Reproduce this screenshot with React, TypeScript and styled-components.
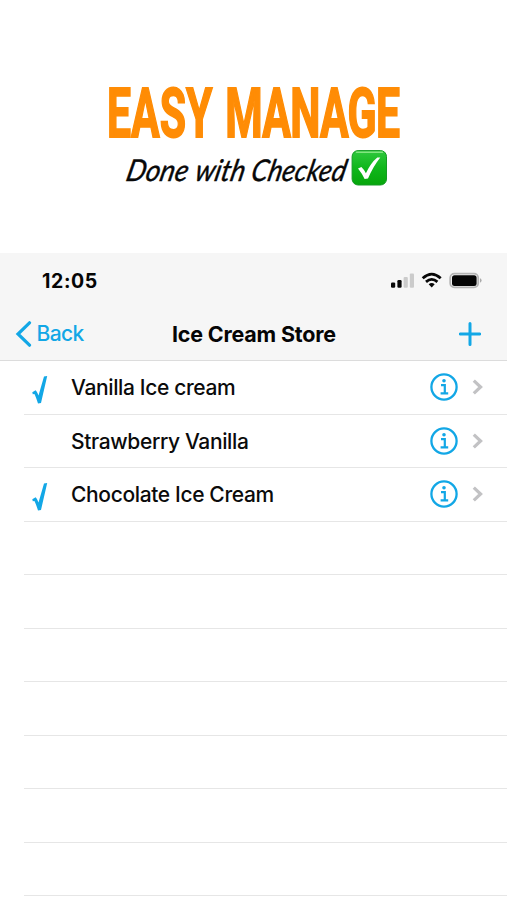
import React from "react";
import styled, { createGlobalStyle } from "styled-components";

const BLUE = "#12a7e6";

const GlobalStyle = createGlobalStyle`
  *, *::before, *::after { box-sizing: border-box; }
  body { margin: 0; background: #fff; font-family: Inter, "Liberation Sans", sans-serif; }
`;

const Page = styled.main`
  width: 507px;
  height: 900px;
  overflow: hidden;
  background: #fff;
  display: flex;
  flex-direction: column;
`;

const Promo = styled.header`
  height: 253px;
  flex: none;
  padding-top: 80px;
`;

const Headline = styled.h1`
  margin: 0 0 0 107px;
  width: max-content;
  height: 69px;
  font: 700 68px/69px Roboto, sans-serif;
  color: #ff8c05;
  white-space: nowrap;
  word-spacing: 3.5px;
  transform-origin: 0 0;
  transform: scaleX(0.628);
  -webkit-text-stroke: 1.8px #ff8c05;
`;

const TightWord = styled.span`
  letter-spacing: -1.2px;
`;

const Tagline = styled.div`
  display: flex;
  height: 40px;
  padding-left: 125px;
`;

const ScriptWord = styled.span<{ $slot: number; $scale: number }>`
  width: ${(p) => p.$slot}px;
  flex: none;
  height: 40px;
  font: italic 400 30px/40px Lato, sans-serif;
  color: #080808;
  white-space: nowrap;
  transform-origin: 0 31px;
  transform: scaleX(${(p) => p.$scale}) skewX(-14deg);
  -webkit-text-stroke: 0.4px #080808;
`;

const CheckBadge = styled.svg`
  width: 36px;
  height: 36px;
  margin-top: 1px;
  flex: none;
`;

const TopBar = styled.section`
  height: 108px;
  flex: none;
  background: #f6f6f6;
  border-bottom: 1px solid #dcdcdc;
`;

const StatusBar = styled.div`
  height: 54px;
  display: flex;
  align-items: center;
  justify-content: space-between;
  padding: 1px 25px 0 42px;
`;

const Clock = styled.span`
  font-size: 19.5px;
  font-weight: 700;
  letter-spacing: 0.6px;
  color: #050505;
`;

const StatusIcons = styled.svg`
  width: 92px;
  height: 18px;
`;

const NavBar = styled.nav`
  height: 53px;
  display: grid;
  grid-template-columns: 157px 1fr 50px;
  align-items: center;
  padding: 0 26px 0 15px;
`;

const BackButton = styled.button`
  border: 0;
  padding: 0;
  background: none;
  display: flex;
  align-items: center;
  gap: 4.5px;
  font: 500 21px/26px Inter, sans-serif;
  letter-spacing: -0.6px;
  color: ${BLUE};
`;

const BackLabel = styled.span`
  padding-top: 1px;
`;

const Title = styled.h2`
  margin: 0;
  font-size: 21.5px;
  line-height: 26px;
  font-weight: 700;
  letter-spacing: -0.2px;
  color: #050505;
  white-space: nowrap;
`;

const AddButton = styled.button`
  border: 0;
  padding: 0;
  background: none;
  justify-self: end;
  display: flex;
`;

const List = styled.ul`
  list-style: none;
  margin: 0;
  padding: 0 0 0 24px;
`;

const Row = styled.li`
  height: 53.55px;
  border-bottom: 1px solid #e6e6e6;
  display: flex;
  align-items: center;
`;

const CheckSlot = styled.span`
  width: 47px;
  height: 30px;
  padding: 4px 0 0 8px;
  flex: none;
`;

const Label = styled.span`
  flex: 1;
  padding-top: 2px;
  font-size: 21px;
  line-height: 26px;
  font-weight: 500;
  letter-spacing: -0.36px;
  color: #0b0b0b;
  white-space: nowrap;
`;

const Accessories = styled.span`
  display: flex;
  align-items: center;
  gap: 14px;
  padding-right: 24px;
`;

const Tick = () => (
  <svg width="16" height="28" viewBox="0 0 16 28" display="block">
    <path d="M0.3 16.2L3.6 14.2Q4.8 15 6.5 19.6L12 0.5L15.2 0L9 27L6 27.4Q3.8 20.5 2.4 17.9L0.8 18.3Z" fill={BLUE} />
  </svg>
);

const Info = () => (
  <svg width="28" height="28" viewBox="0 0 28 28">
    <circle cx="14" cy="14" r="12.6" fill="none" stroke={BLUE} strokeWidth="2.3" />
    <circle cx="14" cy="7.7" r="1.8" fill={BLUE} />
    <path d="M11 12.1H14.8V20.3M10.6 20.3H18.2" fill="none" stroke={BLUE} strokeWidth="2.2" />
  </svg>
);

const Chevron = () => (
  <svg width="11" height="16" viewBox="0 0 11 16">
    <path d="M1.8 1.6L8.6 8L1.8 14.4" fill="none" stroke="#c2c2c4" strokeWidth="3.2" />
  </svg>
);

const items = [
  { name: "Vanilla Ice cream", checked: true },
  { name: "Strawberry Vanilla", checked: false },
  { name: "Chocolate Ice Cream", checked: true },
];

export default function App() {
  return (
    <Page>
      <GlobalStyle />
      <Promo>
        <Headline>
          EASY <TightWord>MANAGE</TightWord>
        </Headline>
        <Tagline>
          <ScriptWord $slot={69} $scale={0.92}>Done</ScriptWord>
          <ScriptWord $slot={56} $scale={0.9}>with</ScriptWord>
          <ScriptWord $slot={101} $scale={0.89}>Checked</ScriptWord>
          <CheckBadge viewBox="0 0 36 36">
            <defs>
              <linearGradient id="badge" x1="0" y1="0" x2="0" y2="1">
                <stop offset="0" stopColor="#2fc83d" />
                <stop offset="0.5" stopColor="#0fb71b" />
                <stop offset="1" stopColor="#06a60b" />
              </linearGradient>
            </defs>
            <rect x="1.1" y="0.6" width="34.4" height="34.4" rx="6" fill="url(#badge)" stroke="#149a24" strokeWidth="1" />
            <path d="M5.5 2.2H31.5" stroke="#83e580" strokeWidth="1.5" strokeLinecap="round" />
            <path d="M7 18.6L10.4 17Q12.8 19.2 14.9 23.2Q19.5 13 26.3 7.4H29.3Q22 16.5 17 28.5L13.6 29Q11 23.5 7 18.6Z" fill="#fff" />
          </CheckBadge>
        </Tagline>
      </Promo>
      <TopBar>
        <StatusBar>
          <Clock>12:05</Clock>
          <StatusIcons viewBox="0 0 92 18">
            <rect x="1" y="10.4" width="4.2" height="5.3" rx="1.2" fill="#080808" />
            <rect x="7.4" y="8.1" width="4.2" height="7.6" rx="1.2" fill="#080808" />
            <rect x="13.6" y="4.9" width="4.2" height="10.8" rx="1" fill="#cbcbcb" />
            <rect x="19.8" y="1.6" width="4.2" height="14.1" rx="1" fill="#cbcbcb" />
            <path d="M32.7 6.3Q41.7 -2 50.7 6.3M36 9.9Q41.7 4.9 47.4 9.9" fill="none" stroke="#080808" strokeWidth="2.8" />
            <path d="M38.7 12.3Q41.7 9.9 44.7 12.3L41.7 15.5Z" fill="#080808" />
            <rect x="60.2" y="1.6" width="28" height="13.8" rx="4.2" fill="#f6f6f6" stroke="#b5b5b5" strokeWidth="1.8" />
            <rect x="62" y="3.3" width="24.6" height="10.6" rx="2.5" fill="#050505" />
            <path d="M90 6.3V10.8Q91.6 10.1 91.6 8.5T90 6.3Z" fill="#aaa" />
          </StatusIcons>
        </StatusBar>
        <NavBar>
          <BackButton>
            <svg width="17" height="26" viewBox="0 0 17 26">
              <path d="M14.5 1.8L3 13L14.5 24.2" fill="none" stroke={BLUE} strokeWidth="3.2" strokeLinecap="round" />
            </svg>
            <BackLabel>Back</BackLabel>
          </BackButton>
          <Title>Ice Cream Store</Title>
          <AddButton aria-label="Add">
            <svg width="22" height="24" viewBox="0 0 22 24">
              <path d="M11 1.6V22.4M1.2 12H20.8" stroke={BLUE} strokeWidth="3" strokeLinecap="round" />
            </svg>
          </AddButton>
        </NavBar>
      </TopBar>
      <List>
        {items.map((item) => (
          <Row key={item.name}>
            <CheckSlot>{item.checked && <Tick />}</CheckSlot>
            <Label>{item.name}</Label>
            <Accessories>
              <Info />
              <Chevron />
            </Accessories>
          </Row>
        ))}
        {Array.from({ length: 7 }, (_, i) => (
          <Row key={i} />
        ))}
      </List>
    </Page>
  );
}
